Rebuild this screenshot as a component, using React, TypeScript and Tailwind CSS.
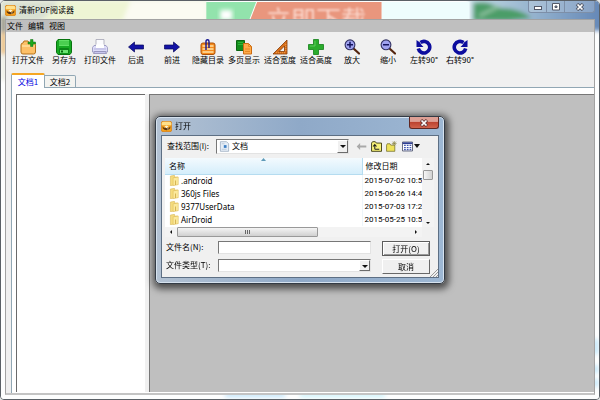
import React from 'react';

const Svg: React.FC<{ children: React.ReactNode; className?: string }> = ({ children, className = 'h-4 w-4' }) => (
  <svg viewBox="0 0 16 16" className={className} aria-hidden="true">
    {children}
  </svg>
);

const AppLogo = () => (
  <Svg className="h-[11px] w-[11px] shrink-0">
    <rect x="0.5" y="0.5" width="15" height="15" rx="2.5" fill="#f4a01c" stroke="#d87a10" />
    <path d="M1 3.5Q1 1 3.500 1h9Q15 1 15 3.500V6H1z" fill="#ffe08a" />
    <path d="M2.500 7.500l2 2.500 3.500-1 3.500 1 2-2.500v3q-2 3-5.500 3T2.500 10.500z" fill="#5b3510" />
    <path d="M5 8l3 2.500L11 8 8 6.500z" fill="#fff4d0" />
    <circle cx="10" cy="11.500" r="1" fill="#f7e3b2" />
  </Svg>
);

const OpenIcon = () => (
  <Svg>
    <path d="M1 6q0-2 2-2l1-2h4l1 2h5q1.500 0 1.500 1.500v7.500q0 2-2 2h-10.500q-2 0-2-2z" fill="#fdc068" stroke="#b5731c" />
    <path d="M2 7h12.500" stroke="#ffe0a0" strokeWidth="1.500" />
    <path d="M10.500 0.500h2.500v2.500h2.500v2h-2.500v2.500h-2.500v-2.500h-2.500v-2h2.500z" fill="#1da81d" stroke="#0d6f12" strokeWidth="0.500" />
  </Svg>
);

const SaveIcon = () => (
  <Svg>
    <path d="M2 0.500h12l1.500 2v11l-1.500 2H2l-1.500-2v-11z" fill="#17a923" stroke="#08740f" />
    <rect x="3" y="1" width="10" height="6" fill="#61e066" />
    <path d="M3 3h10M3 5h10" stroke="#1fae2a" strokeWidth="0.700" />
    <rect x="3" y="9" width="10" height="5.500" rx="1" fill="#0b8417" />
    <rect x="4" y="11" width="8" height="3" fill="#6ae571" />
    <rect x="5" y="11.500" width="2" height="2" fill="#07680e" />
  </Svg>
);

const PrintIcon = () => (
  <Svg>
    <path d="M4 0.500h8v7H4z" fill="#fbfbfd" stroke="#a5a5b4" strokeWidth="0.800" />
    <path d="M2 6.500h12l1.500 2v4.500h-15v-4.500z" fill="#dddcf8" stroke="#9291bb" strokeWidth="0.800" />
    <path d="M4 5.500h8v3.500H4z" fill="#fff" />
    <path d="M2.500 12.500h11l1 2h-13z" fill="#c8c6ee" stroke="#8583ae" strokeWidth="0.700" />
    <path d="M2 10h12" stroke="#b3b1dc" />
  </Svg>
);

const BackIcon = () => (
  <Svg>
    <path d="M0.500 8l6-5v3h9v4h-9v3z" fill="#1313a5" stroke="#06065c" strokeWidth="0.700" />
  </Svg>
);

const ForwardIcon = () => (
  <Svg>
    <path d="M15.500 8l-6-5v3h-9v4h9v3z" fill="#1313a5" stroke="#06065c" strokeWidth="0.700" />
  </Svg>
);

const OutlineIcon = () => (
  <Svg>
    <rect x="1" y="4" width="14" height="11.500" rx="2" fill="#f58a1d" stroke="#ad5208" />
    <path d="M2.500 7h11M2.500 10h11M2.500 13h11" stroke="#ffe3a6" strokeWidth="1.300" />
    <path d="M6 11V2.500Q6 0.800 7.500 0.800T9 2.500V9" fill="none" stroke="#14148f" strokeWidth="1.400" />
  </Svg>
);

const PagesIcon = () => (
  <Svg>
    <path d="M0.500 1.500h8v10h-8z" fill="#148d1c" stroke="#0a6611" />
    <path d="M2 3.500h5M2 5.500h5" stroke="#2cb535" />
    <path d="M7.500 4.500h5l3 3v7.500h-8z" fill="#ffab4a" stroke="#cb6b12" />
    <path d="M12.500 4.500v3h3M9 10h5M9 12.500h5" fill="none" stroke="#e38420" strokeWidth="0.900" />
  </Svg>
);

const TriangleIcon = () => (
  <Svg>
    <path d="M15 1v14H1z M12.500 7v5.500H7z" fill="#d8701a" fillRule="evenodd" stroke="#853b08" strokeWidth="0.800" />
    <path d="M4 13.700h10M13.800 5v8" stroke="#f6a960" strokeWidth="0.800" strokeDasharray="1 1" />
  </Svg>
);

const PlusIcon = () => (
  <Svg>
    <path d="M5.500 0.500h5v5h5v5h-5v5h-5v-5h-5v-5h5z" fill="#2aac2c" stroke="#118018" strokeWidth="0.800" />
    <path d="M7 2v5H2" fill="none" stroke="#67d268" strokeWidth="0.800" />
  </Svg>
);

const ZoomIcon: React.FC<{ plus?: boolean }> = ({ plus }) => (
  <Svg>
    <path d="M9.500 9.500l5.500 5" stroke="#54250f" strokeWidth="2.200" strokeLinecap="round" />
    <circle cx="6" cy="5.800" r="4.900" fill="#9fa2ef" stroke="#303061" strokeWidth="1.100" />
    <path d={plus ? 'M3 5.800h6M6 2.800v6' : 'M3 5.800h6'} stroke="#15155f" strokeWidth="1.500" />
  </Svg>
);

const RotateIcon: React.FC<{ right?: boolean }> = ({ right }) => (
  <Svg className={right ? 'h-4 w-4 -scale-x-100' : 'h-4 w-4'}>
    <path d="M4.500 3.500A5.800 5.800 0 1 1 2.300 9.500" fill="none" stroke="#0d0d9e" strokeWidth="3.600" />
    <path d="M0.500 1v7h7l-2.200-2.200L4 3.500z" fill="#0d0d9e" />
  </Svg>
);

const tools = [
  { label: '打开文件', icon: <OpenIcon /> },
  { label: '另存为', icon: <SaveIcon /> },
  { label: '打印文件', icon: <PrintIcon /> },
  { label: '后退', icon: <BackIcon /> },
  { label: '前进', icon: <ForwardIcon /> },
  { label: '隐藏目录', icon: <OutlineIcon /> },
  { label: '多页显示', icon: <PagesIcon /> },
  { label: '适合宽度', icon: <TriangleIcon /> },
  { label: '适合高度', icon: <PlusIcon /> },
  { label: '放大', icon: <ZoomIcon plus /> },
  { label: '缩小', icon: <ZoomIcon /> },
  { label: '左转90°', icon: <RotateIcon /> },
  { label: '右转90°', icon: <RotateIcon right /> },
];

const files = [
  { name: '.android', date: '2015-07-02 10:5' },
  { name: '360js Files', date: '2015-06-26 14:4' },
  { name: '9377UserData', date: '2015-07-03 17:2' },
  { name: 'AirDroid', date: '2015-05-25 10:5' },
];

const FolderIcon = () => (
  <Svg className="h-[11px] w-[11px] shrink-0">
    <path d="M2 1.500l6-1v14l-6 1z" fill="#f5dc7d" stroke="#d2ad45" strokeWidth="0.700" />
    <path d="M8 2.500h5v12H8z" fill="#e7c252" />
    <path d="M6 4l7.500-1v11L6 15.500z" fill="#fbe99c" stroke="#d9b652" strokeWidth="0.700" />
    <path d="M9.500 8v6.500" stroke="#c49a31" />
  </Svg>
);

const Arrow: React.FC<{ d: string }> = ({ d }) => (
  <svg viewBox="0 0 6 6" className="h-[6px] w-[6px]" aria-hidden="true">
    <path d={d} fill="#111" />
  </svg>
);

const DropArrow = () => (
  <span className="pointer-events-none absolute top-px right-px bottom-px flex w-[11px] items-center justify-center border border-t-white border-r-[#6c6c6c] border-b-[#6c6c6c] border-l-white bg-[#f0f0f0]">
    <Arrow d="M0 2h6L3 5z" />
  </span>
);

const sunken = 'border border-t-[#777] border-l-[#777] border-r-[#e3e3e3] border-b-[#e3e3e3] bg-white';

const Backdrop = () => (
  <div className="absolute inset-0 overflow-hidden" aria-hidden="true">
    <svg viewBox="0 0 600 400" preserveAspectRatio="none" className="h-full w-full">
      <defs>
        <filter id="soft" x="-20%" y="-50%" width="140%" height="200%">
          <feGaussianBlur stdDeviation="2" />
        </filter>
        <linearGradient id="sky" x2="1">
          <stop offset="0" stopColor="#c3dbe4" />
          <stop offset="1" stopColor="#5f83b4" />
        </linearGradient>
      </defs>
      <rect width="600" height="400" fill="#fdfefe" />
      <rect width="206" height="20" fill="#f3f5e8" />
      <g filter="url(#soft)">
        <path d="M0 0h62q-8 12-24 20H0z" fill="#d9e0d2" />
        <path d="M58 0h72l-8 20H42z" fill="#eef5d4" />
        <path d="M130 0h76v20h-84z" fill="#fbfbf2" />
        <path d="M0 16h5v16H0z" fill="#8d8a78" />
        <path d="M0 32h5v22H0z" fill="#e5b876" />
        <path d="M0 54h5v26H0z" fill="#edeee4" />
        <path d="M470 -4h140v34H470z" fill="url(#sky)" />
        <path d="M474 2q14-3 26 5 20 0 32 10l-24 3h-34z" fill="#4b9d67" />
        <path d="M480 15l20-10" stroke="#93c5a5" strokeWidth="3" />
        <path d="M225 394h60v4h-60z" fill="#bfe4fb" />
        <path d="M300 394h85v4h-85z" fill="#c9f2fb" />
        <path d="M595 340h4v15h-4zM595 366h4v8h-4zM595 380h4v8h-4z" fill="#b8e3f9" />
      </g>
      <path d="M206 1h50l-7 18h-43z" fill="#92e3ac" />
      <path d="M257 1h125v18H250z" fill="#e9967d" />
      <path d="M382 1h88v18h-88z" fill="#eefdfd" />
      <rect x="220" y="9" width="12" height="10" fill="#fff" filter="url(#soft)" />
    </svg>
    <span className="absolute top-[3px] left-[265px] text-[25px] leading-[28px] text-[#fbd9cf] blur-[1px]">立即下载</span>
  </div>
);

const captionButton = 'flex w-[18px] items-center justify-center border-r border-[#7d8fa8]';

const TitleBar = () => (
  <header className="flex h-[18px] shrink-0 items-start justify-between">
    <div className="flex h-[18px] items-center gap-[3px]">
      <AppLogo />
      <h1>清新PDF阅读器</h1>
    </div>
    <div className="flex h-[12px] rounded-b-[3px] border border-t-0 border-[#7d8fa8] bg-white/20">
      <button aria-label="最小化" className={captionButton}>
        <svg viewBox="0 0 10 8" className="h-2 w-[10px]"><rect x="1.500" y="3.500" width="7" height="3" fill="#fff" stroke="#535968" /></svg>
      </button>
      <button aria-label="最大化" className={captionButton}>
        <svg viewBox="0 0 10 8" className="h-2 w-[10px]"><path d="M1.500 0.500h7v6.500h-7z" fill="#fff" stroke="#535968" /><path d="M4 3h2v1.500H4z" fill="#8190a8" stroke="#535968" /></svg>
      </button>
      <button aria-label="关闭" className="flex w-[29px] items-center justify-center">
        <svg viewBox="0 0 10 8" className="h-2 w-[10px]"><path d="M2 1l6 6M8 1L2 7" stroke="#535968" strokeWidth="3.400" /><path d="M2.500 1.500l5 5M7.500 1.500l-5 5" stroke="#fff" strokeWidth="1.700" /></svg>
      </button>
    </div>
  </header>
);

const OpenDialog = () => (
  <section
    role="dialog"
    aria-label="打开"
    className="flex w-[290px] flex-col rounded-[5px] border border-[#333b45] bg-linear-to-r from-[#b3c2d3] via-[#8fa9c8] to-[#9db7d3] px-[5px] pb-[5px] shadow-[1px_2px_7px_3px_rgba(0,0,0,0.6),inset_0_0_0_1px_#d6e2ee]"
  >
    <header className="flex h-[18px] items-start justify-between">
      <h2 className="flex h-[18px] items-center gap-[3px]">
        <AppLogo />
        打开
      </h2>
      <button
        aria-label="关闭"
        className="flex h-[12px] w-[30px] items-center justify-center rounded-b-[3px] border border-t-0 border-[#612721] bg-linear-to-b from-[#dea095] from-40% via-[#bd4431] via-50% to-[#d1624b]"
      >
        <svg viewBox="0 0 10 8" className="h-2 w-[10px]"><path d="M2 1l6 6M8 1L2 7" stroke="#6b3b3b" strokeWidth="3.200" /><path d="M2.500 1.500l5 5M7.500 1.500l-5 5" stroke="#fff" strokeWidth="1.700" /></svg>
      </button>
    </header>

    <div className="relative border border-[#5d6f84] bg-[#f0f0f0] px-[3px] pt-[2px] pb-[3px]">
      <div className="flex h-4 items-center">
        <label htmlFor="folder" className="w-[51px] pl-[2px]">查找范围(I):</label>
        <div className="relative w-[133px]">
          <select id="folder" className={`${sunken} block h-[15px] w-full appearance-none pl-[15px]`}>
            <option>文档</option>
          </select>
          <Svg className="pointer-events-none absolute top-[2px] left-[3px] h-[11px] w-[11px]">
            <path d="M2 1h9l3 3v11H2z" fill="#e6eef7" stroke="#8fa2b8" />
            <path d="M4 4h4M4 12h7" stroke="#a7b9cc" />
            <path d="M7 6h4v4H7z" fill="#3c7fc4" />
          </Svg>
          <DropArrow />
        </div>
        <div className="flex items-center gap-1 pl-[7px]">
          <button aria-label="后退">
            <Svg className="h-[11px] w-[11px]"><path d="M1 8l5-5v3.500h9v3H6V13z" fill="#a9a9a9" /></Svg>
          </button>
          <button aria-label="向上一级">
            <Svg className="h-[11px] w-[11px]"><path d="M0.800 3l1.500-2h4l1.500 2h7.500v12H0.800z" fill="#f7f17a" stroke="#37360c" strokeWidth="1.300" /><path d="M5.500 12V6M3 8l2.500-3L8 8M5.500 12H12" fill="none" stroke="#222" strokeWidth="1.500" /></Svg>
          </button>
          <button aria-label="新建文件夹">
            <Svg className="h-[11px] w-[11px]"><path d="M0.800 6l1-2h4l1 2h6v9h-12z" fill="#eee25b" stroke="#6b641c" /><path d="M12 0v7M8.500 3.500h7M9.500 1l5 5M14.500 1l-5 5" stroke="#8a8545" /></Svg>
          </button>
          <button aria-label="查看" className="flex items-center gap-px pl-px">
            <Svg className="h-[11px] w-[11px]"><path d="M0.700 1.500h14.600v13H0.700z" fill="#fff" stroke="#454b69" strokeWidth="1.200" /><path d="M1 2h14v2.500H1z" fill="#2f3f94" /><path d="M3 6.500h2.500M7 6.500h2.500M11 6.500h2.500M3 9.500h2.500M7 9.500h2.500M11 9.500h2.500M3 12.500h2.500M7 12.500h2.500M11 12.500h2.500" stroke="#4056b0" strokeWidth="1.800" /></Svg>
            <Arrow d="M0 1h6L3 5z" />
          </button>
        </div>
      </div>

      <div className="mt-1 grid grid-cols-[1fr_12px] grid-rows-[69px_10px] pr-px">
        <div className="overflow-hidden bg-white">
          <table className="w-full table-fixed border-collapse text-left">
            <thead>
              <tr className="h-4">
                <th className="relative w-[197px] border-r border-b border-[#b5dcf0] bg-linear-to-b from-[#f3fafe] to-[#d5eefb] p-0 pl-1 font-normal">
                  名称
                  <svg viewBox="0 0 5 3" className="absolute top-0 left-[96px] h-[3px] w-[5px]" aria-hidden="true"><path d="M0 3l2.500-3L5 3z" fill="#5f9ab8" /></svg>
                </th>
                <th className="border-b border-[#ececec] p-0 pl-[3px] font-normal">修改日期</th>
              </tr>
            </thead>
            <tbody>
              {files.map((file) => (
                <tr key={file.name} className="h-[13px]">
                  <td className="border-r border-[#edf5fa] p-0 pl-1 font-['Noto_Sans',sans-serif]">
                    <span className="flex items-center gap-px">
                      <FolderIcon />
                      {file.name}
                    </span>
                  </td>
                  <td className="p-0 pl-[2px] font-[Roboto,sans-serif] whitespace-nowrap">{file.date}</td>
                </tr>
              ))}
            </tbody>
          </table>
        </div>
        <div className="flex flex-col items-center justify-between bg-[#f3f3f3] pt-[3px] pb-px">
          <div className="flex flex-col items-center gap-[3px]">
            <Arrow d="M1 4h4L3 2z" />
            <span className="h-[10px] w-[10px] rounded-[1px] border border-[#999] bg-linear-to-r from-[#f6f6f6] to-[#d2d2d2]" />
          </div>
          <Arrow d="M1 2h4L3 4z" />
        </div>
        <div className="flex items-center justify-between bg-[#f3f3f3] pr-[3px] pl-[3px]">
          <div className="flex items-center gap-[3px]">
            <Arrow d="M4 1v4L2 3z" />
            <span className="flex h-[10px] w-[141px] items-center justify-center gap-px rounded-[1px] border border-[#999] bg-linear-to-b from-[#f4f4f4] to-[#d0d0d0]">
              <i className="h-1 w-px bg-[#666]" />
              <i className="h-1 w-px bg-[#666]" />
              <i className="h-1 w-px bg-[#666]" />
            </span>
          </div>
          <Arrow d="M2 1v4l2-2z" />
        </div>
        <span className="bg-[#f0f0f0]" />
      </div>

      <div className="mt-1 grid grid-cols-[53px_153px_1fr] gap-y-[3px]">
        <label htmlFor="name" className="pl-px leading-3">文件名(N):</label>
        <input id="name" type="text" autoFocus className={`${sunken} h-[13px] w-full px-px outline-none`} />
        <button className="ml-[11px] h-[15px] w-[48px] border border-[#5d5d5d] bg-[#f0f0f0] shadow-[inset_1px_1px_#fff,inset_-1px_-1px_#999]">打开(O)</button>
        <label htmlFor="type" className="pl-px leading-3">文件类型(T):</label>
        <div className="relative h-[13px]">
          <select id="type" className={`${sunken} block h-[13px] w-full appearance-none`}>
            <option></option>
          </select>
          <DropArrow />
        </div>
        <button className="ml-[11px] h-[15px] w-[48px] border border-t-white border-r-[#686868] border-b-[#686868] border-l-white bg-[#f0f0f0]">取消</button>
      </div>
      <svg viewBox="0 0 8 8" className="absolute right-0 bottom-0 h-2 w-2" aria-hidden="true"><path d="M0 8l8-8M3 8l5-5M6 8l2-2" stroke="#999" /></svg>
    </div>
  </section>
);

const App: React.FC = () => (
  <div className="relative h-screen overflow-hidden bg-[#e6e9e9] font-['Noto_Sans_CJK_SC',sans-serif] text-[8px] leading-[10px] text-black">
    <div className="relative flex h-full flex-col overflow-hidden rounded-t-[5px] rounded-b-[4px] border border-[#5a6066]">
      <Backdrop />
      <div className="relative flex min-h-0 flex-1 flex-col px-1 pb-1">
        <TitleBar />
        <main className="flex min-h-0 flex-1 flex-col border border-b-2 border-[#a2a2a2] border-b-[#c4c4c4] bg-[#f0f0f0]">
          <nav className="flex h-3 shrink-0 items-center gap-[5px] bg-[#bfbfbf] pl-px">
            <button>文件</button>
            <button>编辑</button>
            <button>视图</button>
          </nav>

          <div className="flex h-[41px] shrink-0 pt-[7px] pl-1">
            {tools.map((tool) => (
              <button key={tool.label} className="flex w-9 flex-col items-center whitespace-nowrap">
                {tool.icon}
                {tool.label}
              </button>
            ))}
          </div>

          <div role="tablist" className="relative z-10 -mb-px flex shrink-0 items-end pl-[5px]">
            <button role="tab" aria-selected="true" className="h-[15px] w-[34px] rounded-t-[2px] border border-t-2 border-b-0 border-[#91a7b4] border-t-[#f5a623] bg-white text-[#0000e0]">文档1</button>
            <button role="tab" aria-selected="false" className="h-[13px] w-[31px] rounded-tr-[2px] border border-l-0 border-[#91a7b4] bg-[#f3f3f0]">文档2</button>
          </div>

          <div className="ml-[5px] flex min-h-0 flex-1 border-t border-l border-[#91a7b4] bg-white pt-[6px] pb-px pl-1">
            <aside className="w-[129px] shrink-0 border-t border-l border-[#6a6a6a] bg-white" />
            <div className="w-1 shrink-0 bg-[#f0f0f0]" />
            <div className="flex-1 border-t border-l border-[#777] bg-[#bfbfbf]" />
          </div>
        </main>
      </div>
    </div>
    <div className="fixed inset-0 z-20 grid place-items-center">
      <OpenDialog />
    </div>
  </div>
);

export default App;
